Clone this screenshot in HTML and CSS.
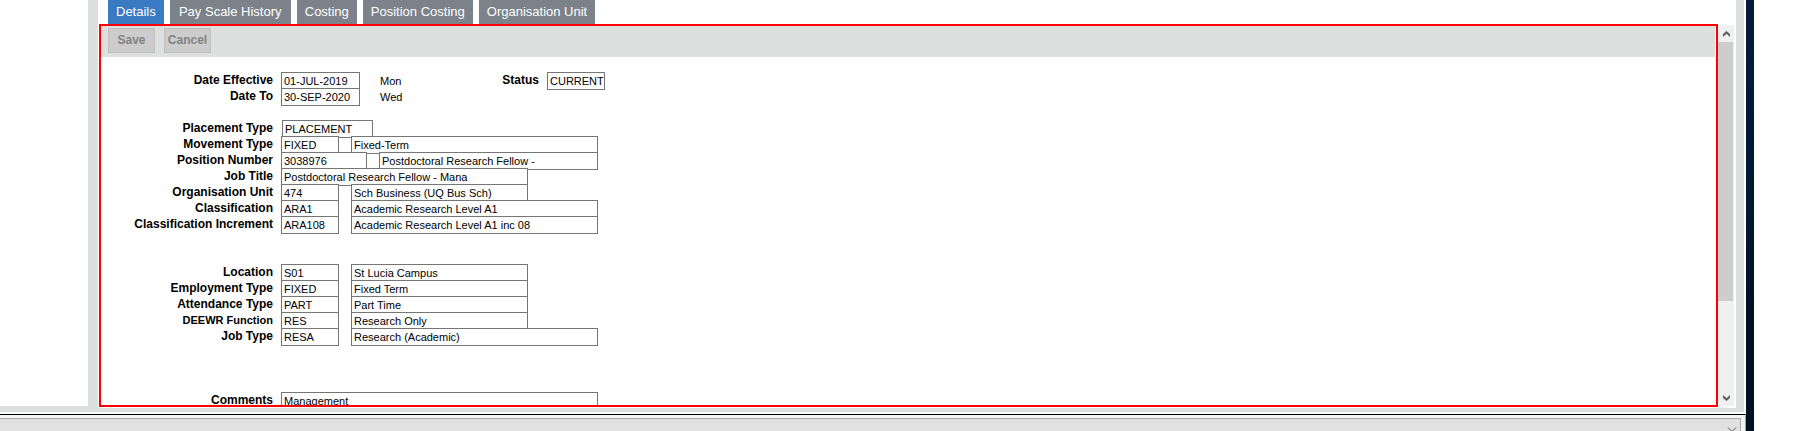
FILE: index.html
```html
<!DOCTYPE html>
<html lang="en">
<head>
<meta charset="utf-8">
<title>Placement Details</title>
<link rel="stylesheet" href="styles.css">
</head>
<body>
<div class="window">
  <div class="workspace">
    <aside class="side"></aside>
    <main class="main">
      <nav class="tabs">
        <button type="button" class="tab active">Details</button>
        <button type="button" class="tab history">Pay Scale History</button>
        <button type="button" class="tab">Costing</button>
        <button type="button" class="tab">Position Costing</button>
        <button type="button" class="tab">Organisation Unit</button>
      </nav>
      <div class="pane">
        <section class="frame">
          <div class="toolbar">
            <button type="button" class="action" disabled>Save</button>
            <button type="button" class="action" disabled>Cancel</button>
          </div>
          <form class="form">
            <div class="group">
              <div class="row"><label for="eff">Date Effective</label><input id="eff" class="date" value="01-JUL-2019" readonly><span class="day">Mon</span><label class="status-label" for="status">Status</label><input id="status" class="status" value="CURRENT" readonly></div>
              <div class="row"><label for="to">Date To</label><input id="to" class="date" value="30-SEP-2020" readonly><span class="day">Wed</span></div>
            </div>
            <div class="group details">
              <div class="row"><label for="ptype">Placement Type</label><input id="ptype" class="type" value="PLACEMENT" readonly></div>
              <div class="row"><label for="mtype">Movement Type</label><input id="mtype" class="code" value="FIXED" readonly><input class="wide" aria-label="Movement type name" value="Fixed-Term" readonly></div>
              <div class="row"><label for="pos">Position Number</label><input id="pos" class="number" value="3038976" readonly><input class="position" aria-label="Position name" value="Postdoctoral Research Fellow -" readonly></div>
              <div class="row"><label for="title">Job Title</label><input id="title" class="title" value="Postdoctoral Research Fellow - Mana" readonly></div>
              <div class="row"><label for="org">Organisation Unit</label><input id="org" class="code" value="474" readonly><input class="medium" aria-label="Organisation unit name" value="Sch Business (UQ Bus Sch)" readonly></div>
              <div class="row"><label for="cls">Classification</label><input id="cls" class="code" value="ARA1" readonly><input class="wide" aria-label="Classification name" value="Academic Research Level A1" readonly></div>
              <div class="row"><label for="inc">Classification Increment</label><input id="inc" class="code" value="ARA108" readonly><input class="wide" aria-label="Increment name" value="Academic Research Level A1 inc 08" readonly></div>
            </div>
            <div class="group employment">
              <div class="row"><label for="loc">Location</label><input id="loc" class="code" value="S01" readonly><input class="medium" aria-label="Location name" value="St Lucia Campus" readonly></div>
              <div class="row"><label for="emp">Employment Type</label><input id="emp" class="code" value="FIXED" readonly><input class="medium" aria-label="Employment type name" value="Fixed Term" readonly></div>
              <div class="row"><label for="att">Attendance Type</label><input id="att" class="code" value="PART" readonly><input class="medium" aria-label="Attendance type name" value="Part Time" readonly></div>
              <div class="row"><label for="fn" class="small">DEEWR Function</label><input id="fn" class="code" value="RES" readonly><input class="medium" aria-label="Function name" value="Research Only" readonly></div>
              <div class="row"><label for="job">Job Type</label><input id="job" class="code" value="RESA" readonly><input class="wide" aria-label="Job type name" value="Research (Academic)" readonly></div>
            </div>
            <div class="group">
              <div class="row"><label for="com">Comments</label><input id="com" class="comments" value="Management" readonly></div>
            </div>
          </form>
        </section>
        <div class="scrollbar">
          <button type="button" class="step" aria-label="Scroll up"><svg width="7" height="6" viewBox="0 0 7 6"><path d="M0 6V3L3.500 0L7 3V6L3.500 2.700Z"/></svg></button>
          <div class="thumb"></div>
          <button type="button" class="step down" aria-label="Scroll down"><svg width="7" height="6" viewBox="0 0 7 6"><path d="M0 0V3L3.500 6L7 3V0L3.500 3.300Z"/></svg></button>
        </div>
      </div>
    </main>
  </div>
  <footer class="footer">
    <button type="button" class="drop" aria-label="Expand"><svg width="10" height="6" viewBox="0 0 10 6"><path d="M1 0.500L5 4.500L9 0.500"/></svg></button>
  </footer>
</div>
<div class="edge"></div>
</body>
</html>
```
FILE: styles.css
```css
* { box-sizing: border-box; }
body {
  margin: 0;
  height: 100vh;
  display: flex;
  overflow: hidden;
  padding-right: 63px;
  background: #fff;
  color: #000;
  font: 11px/16px "Liberation Sans", Arial, sans-serif;
}
button, input { font: inherit; margin: 0; }
button { display: flex; align-items: center; justify-content: center; border: 0; padding: 0; }
.window { flex: 1; min-width: 0; display: flex; flex-direction: column; }
.edge { width: 8px; background: linear-gradient(#001c38, #001a34 45%, #001126 70%); }
.workspace {
  flex: 1;
  min-height: 0;
  display: flex;
  gap: 10px;
  background: #dee0df;
  border-right: 2px solid #fff;
  border-bottom: 2px solid #f6fffc;
}
.side { width: 88px; margin-bottom: 6px; background: #fff; }
.main {
  flex: 1;
  min-width: 0;
  display: flex;
  flex-direction: column;
  margin: 0 8px 4px 0;
  padding: 0 2px 1px 1px;
  background: #fff;
}
.tabs { display: flex; gap: 6px; padding-left: 9px; }
.tab { height: 24px; padding: 0 8px; background: #7b828a; color: #fff; font-size: 13px; white-space: nowrap; }
.tab.history { width: 121px; }
.tab.active { background: #397ac2; }
.pane { flex: 1; min-height: 0; display: flex; }
.frame { flex: 1; min-width: 0; overflow: hidden; border: 2px solid #f00; }
.toolbar { display: flex; gap: 9px; height: 31px; margin-right: 1px; padding: 2px 7px; background: #dee0df; }
.action {
  width: 47px;
  height: 25px;
  border: 1px solid #c0c0c0;
  padding-bottom: 1px;
  background: #ccc;
  color: #838383;
  font-size: 12px;
  font-weight: bold;
}
.form { padding-top: 15px; }
.group { margin-bottom: 16px; }
.details { margin-bottom: 32px; }
.employment { margin-bottom: 48px; }
.row { display: flex; height: 16px; }
.row label { width: 172px; margin-right: 8px; text-align: right; font-weight: bold; font-size: 12px; white-space: nowrap; }
.row .small { font-size: 11px; }
.row input {
  height: 18px;
  padding: 0 0 1px 2px;
  border: 1px solid #767676;
  border-radius: 0;
  background: #fff;
  color: #000;
}
.row .date { width: 79px; }
.day { width: 100px; margin-left: 20px; padding-top: 1px; }
.row .status-label { width: 59px; }
.row .status { width: 58px; }
.row .type { width: 91px; margin-left: 1px; }
.row .code { width: 58px; margin-right: 12px; }
.row .number { width: 86px; margin-right: 12px; }
.row .wide { width: 247px; }
.row .position { width: 219px; }
.row .medium { width: 177px; }
.row .title { width: 247px; }
.row .comments { width: 317px; }
.scrollbar { width: 16px; display: flex; flex-direction: column; margin: 1px 0; background: #f0f0f0; }
.step { height: 17px; background: #f0f0f0; }
.step svg { fill: #606060; }
.step.down { margin-top: auto; }
.thumb { height: 68%; margin-right: 1px; background: #cdcdcd; }
.footer {
  height: 17px;
  padding: 3px 4px 0 0;
  overflow: hidden;
  border-top: 1px solid #000;
  border-right: 1px solid #a0a0a0;
  background: #f3f5f3;
}
.drop {
  width: 100%;
  height: 24px;
  justify-content: flex-end;
  padding-right: 3px;
  border: 1px solid #aaa;
  border-left: 0;
  background: #e1e1e1;
}
.drop svg { fill: none; stroke: #555; stroke-width: 1px; }
```
